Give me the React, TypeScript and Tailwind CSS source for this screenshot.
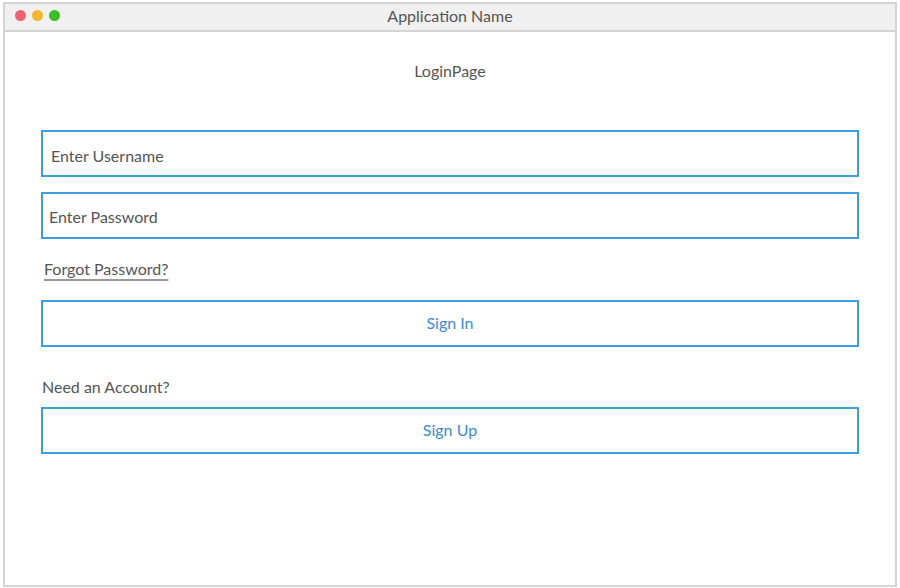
export default function App() {
  return (
    <div className="w-[900px] h-[588px] bg-white pt-[2px] px-[3px] pb-[1px] font-['Lato','Open_Sans',sans-serif] text-[#555]">
      <div className="flex h-full flex-col border-2 border-[#d4d4d4] bg-white">
        {/* title bar */}
        <div className="relative flex h-[28px] items-center justify-center border-b-2 border-[#d4d4d4] bg-[#f0f0f0]">
          <div className="absolute left-[10px] top-[6px] flex gap-[6px]">
            <span className="h-[11px] w-[11px] rounded-full bg-[#ec6471]" />
            <span className="h-[11px] w-[11px] rounded-full bg-[#f0b731]" />
            <span className="h-[11px] w-[11px] rounded-full bg-[#3bbd23]" />
          </div>
          <span className="-mt-[2px] text-[16px] leading-5">Application Name</span>
        </div>

        <div className="flex flex-col px-[36px]">
          <p className="mt-[29px] text-center text-[16px] leading-5">LoginPage</p>

          <div className="mt-[49px] flex h-[47px] items-center border-2 border-[#3c9de3] px-[8px] pt-[4px] text-[16px]">
            Enter Username
          </div>
          <div className="mt-[15px] flex h-[47px] items-center border-2 border-[#3c9de3] px-[6px] pt-[2px] text-[16px]">
            Enter Password
          </div>

          <a className="mt-[20px] ml-[3px] self-start text-[16px] leading-5 underline decoration-2 underline-offset-[4px] decoration-[#999]">
            Forgot Password?
          </a>

          <button className="mt-[21px] flex h-[47px] items-center justify-center border-2 border-[#3c9de3] pb-[2px] text-[16px] text-[#3a8ccc]">
            Sign In
          </button>

          <p className="mt-[30px] ml-[1px] text-[16px] leading-5">Need an Account?</p>

          <button className="mt-[10px] flex h-[47px] items-center justify-center border-2 border-[#3c9de3] pb-[2px] text-[16px] text-[#3a8ccc]">
            Sign Up
          </button>
        </div>
      </div>
    </div>
  )
}
